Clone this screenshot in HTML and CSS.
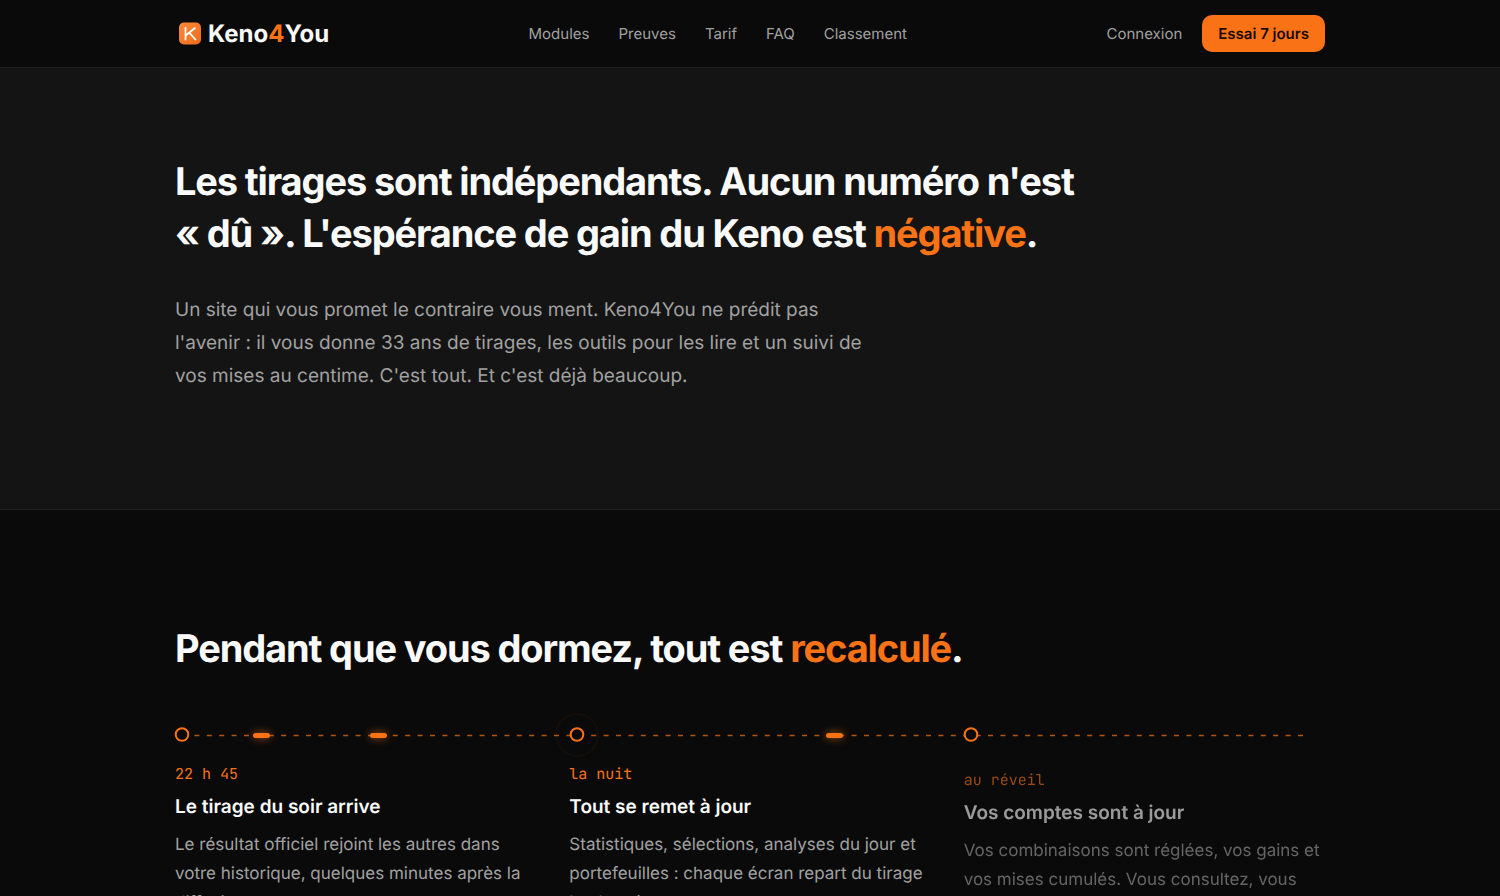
FILE: index.html
```
<!DOCTYPE html>
<html lang="fr">
<head>
	<meta charset="utf-8">
	<meta name="viewport" content="width=device-width, initial-scale=1">
	<title>Keno4You</title>
	<link rel="stylesheet" href="styles.css">
</head>
<body>
	<header class="site-header">
		<div class="container header-inner">
			<a class="logo" href="#">
				<svg width="30" height="30" viewBox="0 0 30 30" aria-hidden="true">
					<defs>
						<linearGradient id="logo-bg" x1="0" y1="0" x2="1" y2="1">
							<stop offset="0" stop-color="#fb8b3c"/>
							<stop offset="1" stop-color="#ee6a1a"/>
						</linearGradient>
					</defs>
					<rect x="4" y="3.5" width="22" height="22" rx="5" fill="url(#logo-bg)"/>
					<path d="M10.5 9v11.5M20 9l-9 7.2M14.4 13.8l6 6.7" fill="none" stroke="#fff" stroke-width="1.8" stroke-linecap="round"/>
				</svg>
				<span>Keno<span class="accent">4</span>You</span>
			</a>
			<nav class="nav">
				<a href="#modules">Modules</a>
				<a href="#preuves">Preuves</a>
				<a href="#tarif">Tarif</a>
				<a href="#faq">FAQ</a>
				<a href="#classement">Classement</a>
			</nav>
			<div class="actions">
				<a class="login" href="#connexion">Connexion</a>
				<a class="btn" href="#essai">Essai 7 jours</a>
			</div>
		</div>
	</header>
	<main>
		<section class="truth">
			<div class="container">
				<h2>Les tirages sont indépendants. Aucun numéro n'est «&nbsp;dû&nbsp;». L'espérance de gain du Keno est <span class="accent">négative</span>.</h2>
				<p>Un site qui vous promet le contraire vous ment. Keno4You ne prédit pas l'avenir : il vous donne 33 ans de tirages, les outils pour les lire et un suivi de vos mises au centime. C'est tout. Et c'est déjà beaucoup.</p>
			</div>
		</section>
		<section class="night">
			<div class="container">
				<h2>Pendant que vous dormez, tout est <span class="accent">recalculé</span>.</h2>
				<svg class="timeline" viewBox="0 0 1150 48" aria-hidden="true">
					<defs>
						<filter id="glow" x="-10%" y="-400%" width="120%" height="900%">
							<feGaussianBlur stdDeviation="4"/>
						</filter>
					</defs>
					<path class="track" d="M7 24.5H1130"/>
					<circle class="halo" cx="402" cy="24" r="21"/>
					<g class="glow">
						<rect x="78" y="22" width="17" height="5" rx="2"/>
						<rect x="195" y="22" width="17" height="5" rx="2"/>
						<rect x="651" y="22" width="17" height="5" rx="2"/>
					</g>
					<g class="pulse">
						<rect x="78" y="22" width="17" height="5" rx="2.5"/>
						<rect x="195" y="22" width="17" height="5" rx="2.5"/>
						<rect x="651" y="22" width="17" height="5" rx="2.5"/>
					</g>
					<g class="dot">
						<circle cx="7" cy="23.5" r="6.3"/>
						<circle cx="402" cy="23.5" r="6.3"/>
						<circle cx="796" cy="23.5" r="6.3"/>
					</g>
				</svg>
				<div class="steps">
					<article class="step">
						<span class="time">22 h 45</span>
						<h3>Le tirage du soir arrive</h3>
						<p>Le résultat officiel rejoint les autres dans votre historique, quelques minutes après la diffusion.</p>
					</article>
					<article class="step">
						<span class="time">la nuit</span>
						<h3>Tout se remet à jour</h3>
						<p>Statistiques, sélections, analyses du jour et portefeuilles : chaque écran repart du tirage le plus récent.</p>
					</article>
					<article class="step entering">
						<span class="time">au réveil</span>
						<h3>Vos comptes sont à jour</h3>
						<p>Vos combinaisons sont réglées, vos gains et vos mises cumulés. Vous consultez, vous décidez.</p>
					</article>
				</div>
			</div>
		</section>
	</main>
</body>
</html>
```
FILE: styles.css
```
* {
	box-sizing: border-box;
}

body {
	margin: 0;
	background: #0a0a0a;
	color: #fafafa;
	font-family: Inter, "Liberation Sans", sans-serif;
	text-rendering: geometricPrecision;
	-webkit-font-smoothing: antialiased;
	overflow-x: hidden;
}

h2, h3, p {
	margin: 0;
}

a {
	color: inherit;
	text-decoration: none;
}

.container {
	max-width: 1198px;
	margin: 0 auto;
	padding: 0 24px;
}

.accent {
	color: #f97316;
}

/* header */
.site-header {
	background: #0a0a0a;
	border-bottom: 1px solid #1f1f1f;
}

.header-inner {
	display: flex;
	align-items: center;
	justify-content: space-between;
	min-height: 67px;
}

.logo {
	display: flex;
	align-items: center;
	gap: 3px;
	font-size: 24px;
	font-weight: 700;
}

.nav {
	display: flex;
	gap: 29px;
	font-size: 15px;
	color: #a1a1a1;
}

.actions {
	display: flex;
	align-items: center;
	gap: 20px;
	font-size: 15px;
}

.login {
	color: #a1a1a1;
}

.btn {
	padding: 10px 16px;
	border-radius: 10px;
	background: #f97316;
	color: #1a0a00;
	font-weight: 600;
	line-height: 17px;
}

/* sections */
h2 {
	font-size: 38px;
	font-weight: 700;
	line-height: 52px;
	letter-spacing: -0.03em;
}

.truth {
	padding: 88px 0 117px;
	background: #141414;
	border-bottom: 1px solid #1f1f1f;
}

.truth h2 {
	max-width: 920px;
}

.truth p {
	max-width: 700px;
	margin-top: 33px;
	font-size: 19px;
	line-height: 33px;
	color: #a1a1a1;
}

.night {
	padding: 113px 0;
}

/* timeline */
.timeline {
	display: block;
	width: 100%;
	margin-top: 36px;
	overflow: visible;
}

.track {
	stroke: #f97316;
	stroke-opacity: 0.7;
	stroke-width: 1.4;
	stroke-dasharray: 5 7.4;
}

.halo {
	fill: none;
	stroke: #f97316;
	stroke-opacity: 0.04;
	stroke-width: 2;
}

.pulse {
	fill: #f97316;
}

.glow {
	fill: #f97316;
	opacity: 0.7;
	filter: url(#glow);
}

.dot {
	fill: #0a0a0a;
	stroke: #f97316;
	stroke-width: 2;
}

.steps {
	display: grid;
	grid-template-columns: repeat(3, 1fr);
	gap: 33px;
	margin-top: 4px;
}

.time {
	display: block;
	font-family: "JetBrains Mono", "DejaVu Sans Mono", monospace;
	font-size: 15px;
	line-height: 22px;
	color: #f97316;
}

h3 {
	margin-top: 7px;
	font-size: 19px;
	font-weight: 600;
	line-height: 30px;
}

.step p {
	margin-top: 9px;
	font-size: 17px;
	line-height: 29px;
	color: #a1a1a1;
}

/* last step is still fading in */
.entering {
	opacity: 0.6;
	transform: translateY(6px);
}

@media (max-width: 800px) {
	.nav {
		display: none;
	}

	.steps {
		grid-template-columns: 1fr;
	}
}
```
